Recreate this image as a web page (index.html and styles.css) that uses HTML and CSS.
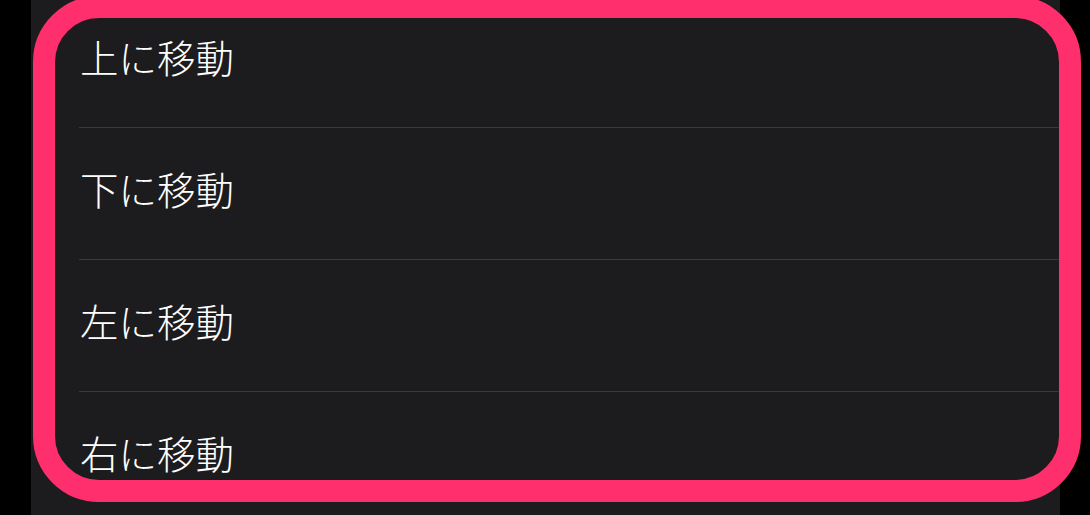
FILE: index.html
```html
<!DOCTYPE html>
<html lang="ja">
<head>
    <meta charset="utf-8">
    <title>移動メニュー</title>
    <link rel="stylesheet" href="styles.css">
</head>
<body>
    <div class="screen">
        <div class="panel">
            <ul class="menu">
                <li class="menu-item"><span class="menu-label">上に移動</span></li>
                <li class="menu-item"><span class="menu-label">下に移動</span></li>
                <li class="menu-item"><span class="menu-label">左に移動</span></li>
                <li class="menu-item"><span class="menu-label">右に移動</span></li>
            </ul>
        </div>
        <!-- focus ring drawn over the list -->
        <div class="focus-ring"></div>
    </div>
</body>
</html>
```

FILE: styles.css
```css
/* Reset */
html, body, ul, li {
    margin: 0;
    padding: 0;
}

body {
    background-color: #000000;
    font-family: "Noto Sans CJK JP", "Noto Sans", sans-serif;
    overflow: hidden;
}

.screen {
    position: relative;
    width: 1090px;
    height: 515px;
    overflow: hidden;
}

/* Gray sheet behind the list */
.panel {
    margin-left: 31px;
    width: 1029px;
    height: 515px;
    background-color: #1c1c1e;
    overflow: hidden;
}

.menu {
    list-style: none;
    margin-top: -4px;
}

.menu-item {
    display: flex;
    align-items: center;
    height: 131px;
    margin-left: 48px;
    padding-left: 1px;
    border-bottom: 1px solid #3a3a3c;
}

.menu-label {
    color: #ffffff;
    font-size: 38.5px;
    font-weight: 300;
    line-height: 1;
    margin-top: -10px;
}

/* Pink focus ring */
.focus-ring {
    position: absolute;
    left: 33px;
    top: -4px;
    width: 1048px;
    height: 506px;
    box-sizing: border-box;
    border: 22px solid #ff2e6d;
    border-radius: 66px;
    pointer-events: none;
}
```
